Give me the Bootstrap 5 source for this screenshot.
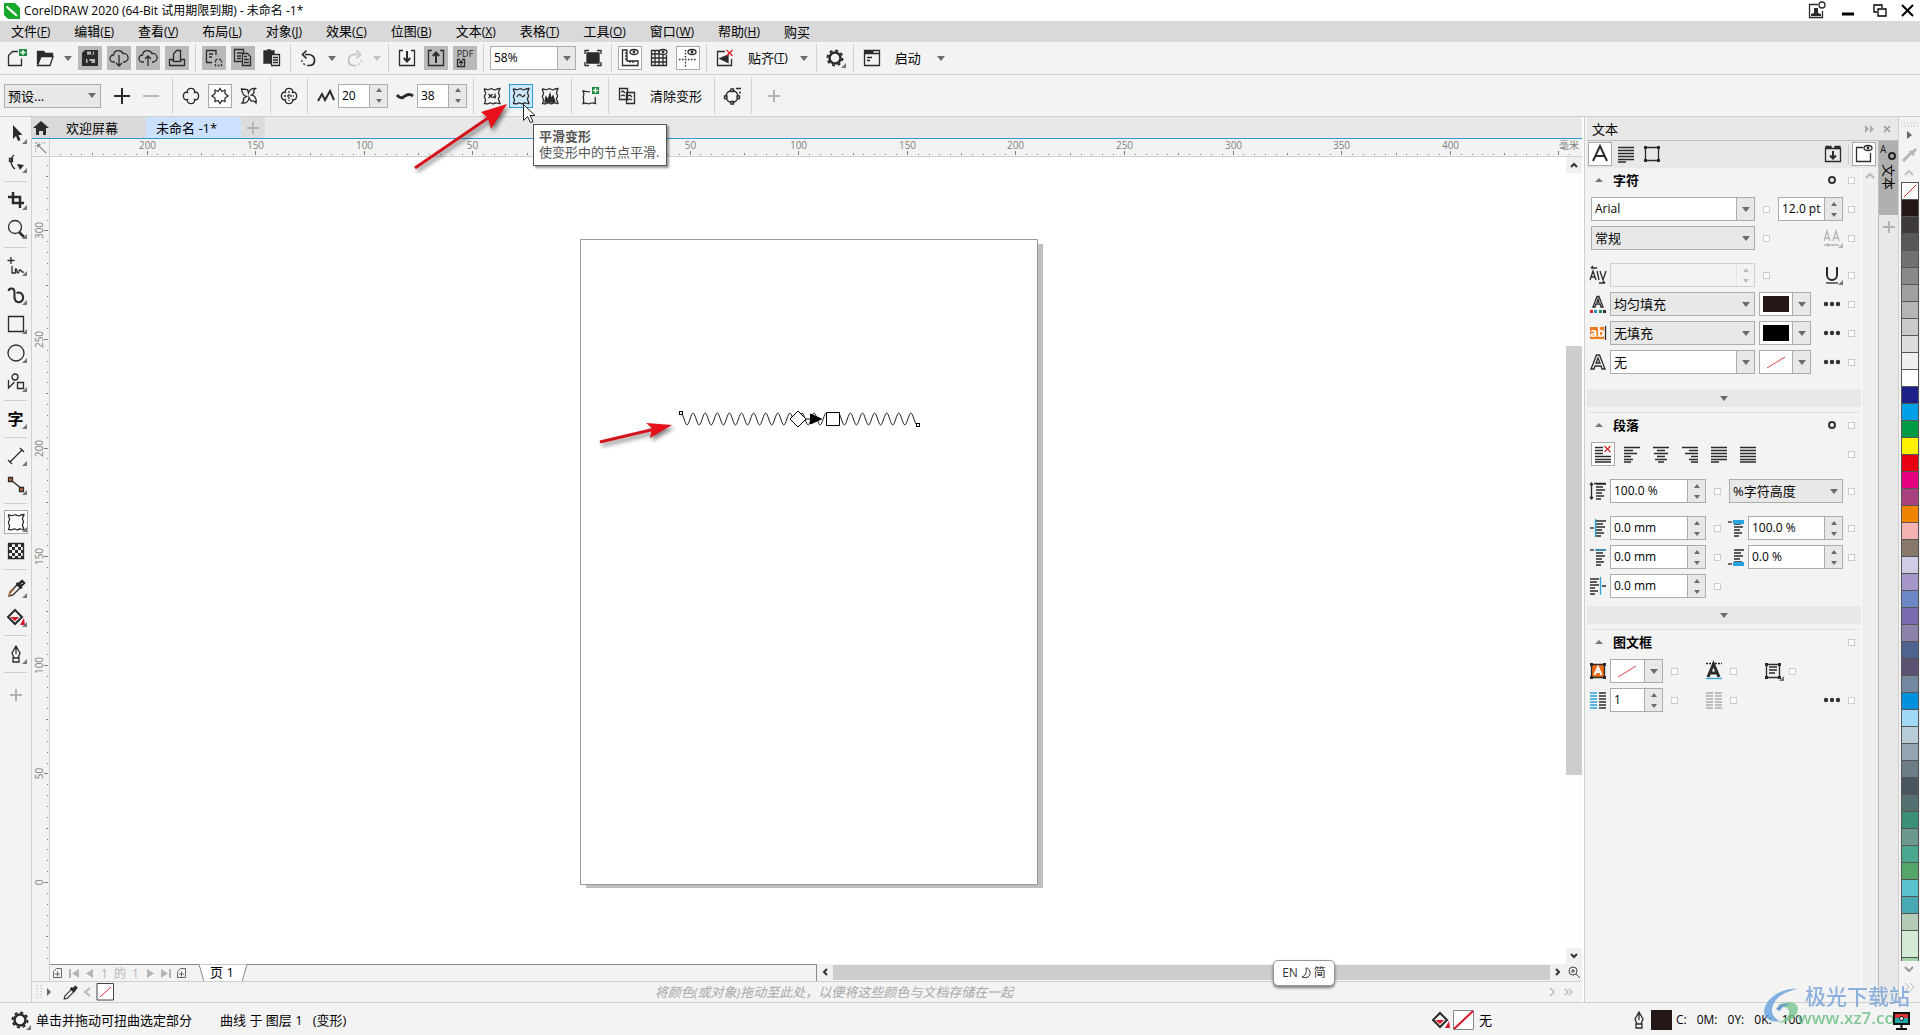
<!DOCTYPE html>
<html lang="zh-CN">
<head>
<meta charset="utf-8">
<meta name="viewport" content="width=device-width, initial-scale=1">
<title>CorelDRAW 2020 - 未命名 -1*</title>
<link href="https://cdn.jsdelivr.net/npm/bootstrap@5.3.0/dist/css/bootstrap.min.css" rel="stylesheet">
<style>
:root{--panel:#f3f3f3;--edge:#cfcfcf;--shade:#e8e8e8;--ink:#2b2b2b}
body{font-family:"Open Sans","Noto Sans CJK SC",sans-serif;font-size:13px;line-height:16px;color:#000;background:var(--panel)}
.app{min-height:100vh;overflow:hidden}
svg{display:block;flex:none;overflow:visible}
.ic{width:24px;height:24px;fill:none;stroke:var(--ink);stroke-width:1.3}
.tb{width:24px;height:24px;padding:0;border:1px solid transparent;background:none;display:flex;align-items:center;justify-content:center;flex:none;color:#000}
.tb.held{background:#b9b9b9}
.tb.picked{background:#fff;border-color:#a9a9a9}
.tb.hot{background:#cde8fb;border-color:#2a9bdc}
.tb.wordy{width:auto;height:24px;border:0;padding:0 6px;white-space:nowrap}
.drop{width:11px;height:24px;border:0;padding:0;background:none;display:flex;align-items:center;justify-content:center;flex:none}
.drop::before{content:"";border:4px solid transparent;border-top:5px solid #6b6b6b;border-bottom:0}
.drop.dim::before{border-top-color:#c4c4c4}
.titlebar{height:21px;background:#fff;font-size:12px}
.menubar{height:21px;background:#d9d9d9;gap:24px;padding-left:11px}
.menubar a{color:#000;text-decoration:none;white-space:nowrap}
.key{font-size:12px}
.bar{gap:5px;padding:0 4px;border-bottom:1px solid var(--edge);background:var(--panel)}
.bar1{height:33px}.bar2{height:42px}
.vsep{width:1px;align-self:stretch;margin:2px 1px;background:#d2d2d2;flex:none}
.field{height:24px;border:1px solid #acacac;background:#fff;display:flex;flex:none}
.field input{border:0;background:none;min-width:0;width:0;flex:1;padding:0 0 0 3px;font-size:12px;color:#000;outline:0}
.field .drop{width:18px;height:22px;border-left:1px solid #acacac;background:var(--shade)}
.steps{width:18px;border-left:1px solid #acacac;background:var(--shade);display:flex;flex-direction:column;flex:none}
.steps button{flex:1;border:0;padding:0;background:none;display:flex;align-items:center;justify-content:center}
.steps button::before{content:"";border:3px solid transparent}
.steps .up::before{border-bottom:4px solid #6b6b6b;border-top:0}
.steps .dn::before{border-top:4px solid #6b6b6b;border-bottom:0}
.field.off{border-color:#d0d0d0;background:none}.field.off .steps{border-color:#d0d0d0;background:none;opacity:.4}
.pick{height:24px;border:1px solid #acacac;border-radius:0;appearance:none;padding:0 20px 0 3px;font-size:13px;line-height:20px;color:#000;flex:none;background:var(--shade) url("data:image/svg+xml,%3Csvg xmlns='http://www.w3.org/2000/svg' width='8' height='5'%3E%3Cpath d='M0 0h8L4 5z' fill='%236b6b6b'/%3E%3C/svg%3E") no-repeat right 4px center}
.toolbox{width:32px;border-right:1px solid var(--edge);padding:5px 4px;gap:5px;background:var(--panel)}
.hsep{height:1px;margin:1px 0;align-self:stretch;background:var(--edge)}
.fly{position:relative}
.fly::after{content:"";position:absolute;right:0;bottom:1px;border-left:5px solid transparent;border-bottom:5px solid #777}
.work{min-width:0}
.tabsrow{height:22px;background:var(--shade);border-bottom:1px solid #2a9bdc}
.tabsrow .tb{height:21px;background:#dcdcdc}
.doc{height:21px;padding:0 24px 0 10px;display:flex;align-items:center;color:#000;text-decoration:none;background:#d9d9d9}
.doc.now{background:#cce0ff}
.ruler{background:var(--panel);color:#777}
.ruler text{font-size:10px;fill:#808080;text-anchor:middle}
.ruler path{stroke:#808080}
.hrule{height:18px;border-bottom:1px solid var(--edge)}
.hrule .ic{height:17px}
.vrule{width:18px;border-right:1px solid var(--edge)}
.stage{background:#fff;min-height:300px}
.stage>svg{position:absolute;left:0;top:0;width:100%;height:100%}
.vscroll{width:16px;background:#fdfdfd}
.arrow{width:16px;height:16px;border:0;padding:0;background:#f0f0f0;flex:none;display:flex;align-items:center;justify-content:center}
.thumb{background:#cdcdcd}
.rest{flex:173}.grab{flex:429}
.pagebar{height:17px;background:var(--panel);color:#ababab;font-size:12px}
.pagebar .thumb{height:15px}
.pagenav{border-top:1px solid #8a8a8a;border-right:1px solid #8a8a8a;width:767px}
.docpal{height:21px;border-top:1px solid var(--edge)}
.docpal em{color:#a8a8a8}
.shade{filter:drop-shadow(2px 3px 2px rgba(0,0,0,.5))}
.gutter{width:5px;background:linear-gradient(90deg,#fff 2px,#cfcfcf 2px,#cfcfcf 3px,var(--panel) 3px)}
.docker{width:274px}
.dscroll{width:17px;background:#efefef;border-left:1px solid #fafafa}
.dhead{height:24px;background:var(--shade);border-bottom:1px solid #bdbdbd;padding-left:5px}
.dtabs{height:27px;background:var(--shade);padding:1px 2px 2px 1px;gap:2px}
.sect{padding:0 6px 0 4px}
.sect h2{font-size:13px;line-height:24px;font-weight:700;margin:0 0 5px;display:flex;align-items:center}
.sect h2::before{content:"";border:4px solid transparent;border-bottom:4px solid #777;border-top:0;margin:0 10px 0 4px}
.cog{margin:0 12px 0 auto}
.line{display:flex;align-items:center;height:24px;margin-bottom:5px}
.line.loose{margin-bottom:13px}
.line.apart{margin-top:13px}
.line.set{gap:5px}
.line>.ic{width:16px;height:24px;margin:0 4px 0 -1px}
.tick{appearance:none;width:7px;height:7px;border:1px solid #ccc;background:#fff;margin:0;flex:none}
.more{height:18px;width:100%;border:0;background:var(--shade);display:flex;align-items:center;justify-content:center}
.more.first{margin-top:15px}
.nextsect{margin-top:5px;border-top:1px solid #e2e2e2}
.chip{flex:1;margin:3px;background:#231815}
.w164{width:164px}.w145{width:145px}.w96{width:96px}.w95{width:95px}.w65{width:65px}.w53{width:53px}.w50{width:50px}.w86{width:86px}.w97{width:97px}.w114{width:114px}.w52{width:52px}
.zh{font-size:13px!important}
.sidecol{width:20px;background:var(--shade);border-left:1px solid #bdbdbd}
.sidecol .tb{width:19px}
.sidetab{height:74px;background:#b0b0b0;border:0;padding:3px 0 0;width:19px;display:flex;flex-direction:column;align-items:flex-start}
.sidetab span{writing-mode:vertical-rl;text-orientation:sideways;line-height:19px;font-size:13px}
.palette{width:22px;border-left:1px solid var(--edge);padding:0 0 0 2px}
.sw{width:18px;height:17px;border:1px solid #555;border-bottom-width:0;padding:0;display:block;flex:none}
.sw.tall{height:27px}.sw.cut{height:4px}
.status{height:33px;border-top:1px solid var(--edge);padding:2px 0 0 8px;background:var(--panel)}
.inkinfo{width:491px}
.cmyk{gap:10px;width:244px;font-size:12px}
.tip{position:absolute;left:533px;top:124px;width:134px;height:42px;background:#fff;border:1px solid #555;box-shadow:2px 2px 2px rgba(0,0,0,.4);padding:3px 5px;color:#555;line-height:16px;white-space:nowrap}
.ime{position:absolute;left:1273px;top:960px;height:26px;width:62px;background:#fff;border:1px solid #999;border-radius:5px;box-shadow:0 2px 3px rgba(0,0,0,.5);font-size:12px;color:#333;display:flex;align-items:center;justify-content:center;gap:3px}
.over{position:absolute;left:0;top:0;pointer-events:none}
.over.monitor{left:auto;top:auto;right:10px;bottom:4px}
.wm{position:absolute;right:9px;bottom:7px;width:150px;height:44px;pointer-events:none;text-align:right;opacity:.75}
.wm b{font-size:21px;color:#6b9bd6;display:block;font-weight:500;margin-right:1px;line-height:24px}
.wm i{font-style:normal;font-weight:600;font-size:17px;color:#5dba78;display:block;line-height:20px}
.wm svg{position:absolute;left:1px;top:3px}
</style>
</head>
<body>
<svg width="0" height="0" class="position-absolute">
<defs>
<symbol id="new" viewBox="0 0 24 24"><path d="M14 5.500H8.500L4.500 9.500v10h13v-7"/><path d="M15 3h8v7h-8z" fill="#1c8a3c" stroke="none"/><path d="M16.500 6.500h5M19 4v5" stroke="#fff"/></symbol>
<symbol id="open" viewBox="0 0 24 24"><path d="M4.500 18V5.500h6l2 2h7v3" fill="#2b2b2b"/><path d="M8 10.500h12L17 19.500H4.500z" fill="#f3f3f3"/></symbol>
<symbol id="save" viewBox="0 0 24 24"><path d="M4 7l3-3h13v16H4z" fill="#2b2b2b" stroke="none"/><path d="M9 5.500h7v3H9zM8 13h9v4H8z" fill="#b9b9b9" stroke="none"/><path d="M14 5v3M10.500 13v3h3" stroke-width="2"/></symbol>
<symbol id="cdn" viewBox="0 0 24 24"><path d="M8 16H6.500a3.500 3.500 0 0 1 0-7A5 5 0 0 1 16 7.500a4 4 0 0 1 1.500 8.500H16M12 9v11M9 17l3 3 3-3"/></symbol>
<symbol id="cup" viewBox="0 0 24 24"><path d="M8 16H6.500a3.500 3.500 0 0 1 0-7A5 5 0 0 1 16 7.500a4 4 0 0 1 1.500 8.500H16M12 20V10M9 13l3-3 3 3"/></symbol>
<symbol id="print" viewBox="0 0 24 24"><path d="M4.500 13.500h3l1 2h7l1-2h3v6h-15zM8.500 15V8l3-3.500h4V15"/></symbol>
<symbol id="copyA" viewBox="0 0 24 24"><path d="M14 9V4.500H4.500v12H10M7 8h4M7 11h3"/><path d="M13.500 13.500h6v6h-6z" stroke-dasharray="2 1.500"/></symbol>
<symbol id="copyB" viewBox="0 0 24 24"><path d="M11 15.500H3.500v-12h9V7M6 7h5M6 10h4M6 12.500h4M11.500 7.500h5l3 3v9h-8zM13 13.500h5M13 16.500h5M13 10.500h3"/></symbol>
<symbol id="paste" viewBox="0 0 24 24"><path d="M4 5h10v12H4z" fill="#2b2b2b"/><path d="M11.500 8.500h8v11h-8z" fill="#f3f3f3"/><path d="M7 4h4M13 11.500h5M13 14h5M13 16.500h5"/></symbol>
<symbol id="undo" viewBox="0 0 24 24"><path d="M8 8.500h4a6 5.500 0 0 1 5.500 6c0 3-2 5-5.500 5" stroke-width="1.700"/><path d="M9.500 4.500L5.500 8.500l4 4" stroke-width="1.700"/><path d="M12 19.500c-4 0-7-2-7.500-6" stroke-dasharray="2 2"/></symbol>
<symbol id="import" viewBox="0 0 24 24"><path d="M8 4.500H4.500v15H19.500v-15H16"/><path d="M12 5v10M8.800 12l3.200 3.500 3.200-3.500" stroke-width="2"/></symbol>
<symbol id="export" viewBox="0 0 24 24"><path d="M8 4.500H4.500v15H19.500v-15H16"/><path d="M12 17V7M8.800 10L12 6.500l3.200 3.500" stroke-width="2"/></symbol>
<symbol id="fit" viewBox="0 0 24 24"><path d="M6 7h12v10H6z" fill="#2b2b2b"/><path d="M4 8V4.500h4M16 4.500h4V8M20 16v3.500h-4M8 19.500H4V16"/></symbol>
<symbol id="eye" viewBox="0 0 24 24"><ellipse cx="16" cy="6" rx="4" ry="2.500"/><circle cx="16" cy="6" r=".8"/></symbol>
<symbol id="rul" viewBox="0 0 24 24"><path d="M4.500 4v15.500H20V15H9V4zM7 7h2M7 10h2M7 13h2M12 15v2M15 15v2"/><use href="#eye"/></symbol>
<symbol id="grid" viewBox="0 0 24 24"><path d="M4.500 4v15.500h15V9M4 4.500h8M8 4v15M12 4v15M16 9v10M4 8h8M4 12h16M4 16h16"/><use href="#eye"/></symbol>
<symbol id="guide" viewBox="0 0 24 24"><path d="M3 13.500h18M9.500 4v17" stroke-dasharray="1.500 1.500"/><use href="#eye"/></symbol>
<symbol id="snap" viewBox="0 0 24 24"><path d="M12 5.500H4.500v14h14V13"/><path d="M15 9l-8 3.500 8 4z" fill="#2b2b2b"/><path d="M13.500 4l6 6M19.500 4l-6 6" stroke="#e01b24"/></symbol>
<symbol id="gear" viewBox="0 0 24 24"><circle cx="12" cy="12" r="5.500" stroke-width="2.500"/><circle cx="12" cy="12" r="7.500" stroke-width="2" stroke-dasharray="3 2.890"/></symbol>
<symbol id="launch" viewBox="0 0 24 24"><path d="M4.500 4.500h15v15h-15zM4.500 7.500h15M7 11.500h5M7 14.500h3"/><path d="M4.500 6h9" stroke-width="3"/></symbol>
<symbol id="plus" viewBox="0 0 24 24"><path d="M4 12h16M12 4v16" stroke-width="2"/></symbol>
<symbol id="plusg" viewBox="0 0 24 24"><path d="M6 12h12M12 6v12" stroke="#b3b3b3" stroke-width="2"/></symbol>
<symbol id="minus" viewBox="0 0 24 24"><path d="M4 12h16" stroke="#b9b9b9" stroke-width="2"/></symbol>
<symbol id="push" viewBox="0 0 24 24"><path d="M8.500 8.500c-2-5.500 9-5.500 7 0 5.500-2 5.500 9 0 7 2 5.500-9 5.500-7 0-5.500 2-5.500-9 0-7z"/></symbol>
<symbol id="zip" viewBox="0 0 24 24"><path d="M12 4.500l2 3 3-1.500v3.500l3 2.500-3 2v3.500l-3-1-2 3-2-3-3 1V14l-3-2 3-2.500V6l3 1.500z"/></symbol>
<symbol id="twist" viewBox="0 0 24 24"><path d="M4.500 5l6 .5 1 3.500c1-3 3-5 7-4.500-1.500 1-2 3-1.500 4.500l-2.500 2c3 0 5.500 4 4.500 8-1-2-3-2.500-5-2l-2-3.500c0 4-3 6-7 5.500 1-1 2-3 1.500-4.500l3-2C6 12 5 8 4.500 5z"/></symbol>
<symbol id="amp" viewBox="0 0 24 24"><path d="M4 17l4-7 3 6 5-9 4 9" stroke-width="2"/></symbol>
<symbol id="freq" viewBox="0 0 24 24"><path d="M4 11c4 5 6 2 8 1s4-3 8 0" stroke-width="3"/></symbol>
<symbol id="blob" viewBox="0 0 24 24"><path d="M4.500 5c2 0 3 1 4.500.5S11 4 12.500 5s2 1.500 3.500.5 2.500-1 4-1c0 1.500-1.500 2.500-1.500 4s1 2 1 3.500-1.500 2-1 3.500 1 2 1.500 4c-2 .5-2.500-1-4.500-.5s-2 1.500-3.500.5-2-1-3.500 0-2.500 0-4 0c0-1.500 1.500-2.500 1-4s-1.500-2-1-3.500 1.500-2 1-3.500-1.500-2-1-3.500z"/></symbol>
<symbol id="rnd" viewBox="0 0 24 24"><use href="#blob"/><path d="M8.500 10l4 4M8.500 14l4-4M15 9.500v5M13 13h3"/></symbol>
<symbol id="smooth" viewBox="0 0 24 24"><use href="#blob"/><path d="M8 13c1-3 3-3 4-1.500s3 1.500 4-1"/></symbol>
<symbol id="local" viewBox="0 0 24 24"><use href="#blob"/><path d="M7 18l1-5 2 3 2-6 1 5 2-3 2 6z" fill="#2b2b2b"/></symbol>
<symbol id="addb" viewBox="0 0 24 24"><path d="M12 7.500c-2 1-4 0-7-.5 1 2 1.500 3 .5 5s1.500 4-.5 7.500c2 0 3-1 4.500 0s2.500 0 4-.5 2 .5 4 .5c-1-2 .5-4-.5-6.500"/><path d="M14 3h7v7h-7z" fill="#1c8a3c" stroke="none"/><path d="M15 6.500h5M17.500 4v5" stroke="#fff"/></symbol>
<symbol id="copyd" viewBox="0 0 24 24"><path d="M4.500 4.500h8v11h-8zM11.500 8.500h8v11h-8z" fill="#f3f3f3"/><path d="M6 8l2-1 2 2M6 12l2-1 2 1M13 12l2-1 2 2M13 16l2-1 2 1"/></symbol>
<symbol id="conv" viewBox="0 0 24 24"><circle cx="11" cy="12.500" r="6"/><path d="M10 5h2.500v2.500H10zM3.500 12H6v2.500H3.500zM10 17.500h2.500V20H10zM16 12h2.500v2.500H16z" fill="#f3f3f3"/><path d="M15 4.500h5M18 8.500h2"/></symbol>
<symbol id="drp" viewBox="0 0 24 24"><path d="M5 20l1-4 8-8 3 3-8 8z"/><path d="M12.500 7l5.500 5M14 9l4-4 2 2-4 4z" stroke-width="2.500"/><path d="M5 20l1-3 4-4" stroke="#c86b32"/></symbol>
<symbol id="buck" viewBox="0 0 24 24"><path d="M11 5l7 7-7 7-7-7z" stroke-width="2"/><path d="M6 12h9l-4 4zM20 13l1 7h-5z" fill="#d7182a" stroke="none"/></symbol>
<symbol id="nib" viewBox="0 0 24 24"><path d="M12 4l4 7-2 5h-4l-2-5zM12 5v7M9 16h6v4H9z"/></symbol>
<symbol id="lines" viewBox="0 0 24 24"><path d="M4 5.500h16M4 8.500h16M4 11.500h16M4 14.500h16M4 17.500h16M4 20h8"/></symbol>
<symbol id="frame" viewBox="0 0 24 24"><path d="M5.500 5.500h13v13h-13z"/><path d="M4 4h3v3H4zM17 4h3v3h-3zM4 17h3v3H4zM17 17h3v3h-3z" fill="#2b2b2b" stroke="none"/></symbol>
<symbol id="para" viewBox="0 0 16 24"><path d="M6 5h10M6 8h7M6 11h9M6 14h6M6 17h8M6 20h5"/></symbol>
<symbol id="dots" viewBox="0 0 24 24"><g fill="#333" stroke="none"><circle cx="6" cy="12" r="2.200"/><circle cx="12" cy="12" r="2.200"/><circle cx="18" cy="12" r="2.200"/></g></symbol>
</defs>
</svg>

<div class="app d-flex flex-column position-relative">
<header class="titlebar d-flex align-items-center ps-1">
  <svg width="16" height="16" viewBox="0 0 16 16"><path d="M0 0h11l5 5v11H4l-4-4z" fill="#18a82c"/><path d="M3 3l9 8 1 2-2-1-8-7z" fill="#fff" stroke="#fff"/></svg>
  <span class="ms-1">CorelDRAW 2020 (64-Bit 试用期限到期) - 未命名 -1*</span>
  <div class="ms-auto d-flex align-items-center gap-1">
    <button class="tb me-1" aria-label="登录"><svg class="ic" viewBox="0 0 24 24"><path d="M14 5.500H5.500v13h13V12"/><path d="M7 17v-2l3-1V9h4v5l3 1v2z" fill="#2b2b2b" stroke="none"/><circle cx="18" cy="6" r="3"/></svg></button>
    <button class="tb me-1" aria-label="最小化"><svg class="ic" viewBox="0 0 24 24"><path d="M6 15h12" stroke="#000" stroke-width="3"/></svg></button>
    <button class="tb" aria-label="还原"><svg class="ic" viewBox="0 0 24 24" stroke-width="2"><path d="M9 13H6V6h8v3M10 10h8v7h-8z" stroke="#000"/></svg></button>
    <button class="tb" aria-label="关闭"><svg class="ic" viewBox="0 0 24 24"><path d="M6 6l11 11M17 6L6 17" stroke="#000" stroke-width="2"/></svg></button>
  </div>
</header>
<nav class="menubar d-flex align-items-center" id="menu"></nav>

<div class="bar bar1 d-flex align-items-center">
  <button class="tb" aria-label="新建"><svg class="ic"><use href="#new"/></svg></button>
  <button class="tb" aria-label="打开"><svg class="ic"><use href="#open"/></svg></button>
  <button class="drop" aria-label="最近"></button>
  <button class="tb held" aria-label="保存"><svg class="ic"><use href="#save"/></svg></button>
  <button class="tb held" aria-label="下载"><svg class="ic"><use href="#cdn"/></svg></button>
  <button class="tb held" aria-label="上传"><svg class="ic"><use href="#cup"/></svg></button>
  <button class="tb held" aria-label="打印"><svg class="ic"><use href="#print"/></svg></button>
  <i class="vsep"></i>
  <button class="tb held" aria-label="剪切"><svg class="ic"><use href="#copyA"/></svg></button>
  <button class="tb held" aria-label="复制"><svg class="ic"><use href="#copyB"/></svg></button>
  <button class="tb" aria-label="粘贴"><svg class="ic"><use href="#paste"/></svg></button>
  <i class="vsep"></i>
  <button class="tb" aria-label="撤消"><svg class="ic"><use href="#undo"/></svg></button>
  <button class="drop" aria-label="撤消列表"></button>
  <button class="tb" aria-label="重做"><svg class="ic opacity-25"><use href="#undo" transform="matrix(-1 0 0 1 24 0)"/></svg></button>
  <button class="drop dim" aria-label="重做列表"></button>
  <i class="vsep"></i>
  <button class="tb" aria-label="导入"><svg class="ic"><use href="#import"/></svg></button>
  <button class="tb held" aria-label="导出"><svg class="ic"><use href="#export"/></svg></button>
  <button class="tb held" aria-label="发布为 PDF"><svg class="ic" viewBox="0 0 24 24"><text x="12" y="11" text-anchor="middle" font-size="9" fill="#222" stroke="none">PDF</text><path d="M7 13.500H4.500v7h7v-7H9M8 19v-4M6 17l2-2 2 2"/></svg></button>
  <i class="vsep"></i>
  <div class="field w86"><input value="58%" aria-label="缩放级别"><button class="drop" aria-label="缩放列表"></button></div>
  <button class="tb" aria-label="全屏预览"><svg class="ic"><use href="#fit"/></svg></button>
  <i class="vsep"></i>
  <button class="tb picked" aria-label="标尺"><svg class="ic"><use href="#rul"/></svg></button>
  <button class="tb" aria-label="网格"><svg class="ic"><use href="#grid"/></svg></button>
  <button class="tb picked" aria-label="辅助线"><svg class="ic"><use href="#guide"/></svg></button>
  <i class="vsep"></i>
  <button class="tb" aria-label="关闭贴齐"><svg class="ic"><use href="#snap"/></svg></button>
  <button class="tb wordy">贴齐<span class="key">(<u>T</u>)</span></button>
  <button class="drop" aria-label="贴齐列表"></button>
  <i class="vsep"></i>
  <button class="tb fly" aria-label="选项"><svg class="ic"><use href="#gear"/></svg></button>
  <i class="vsep"></i>
  <button class="tb" aria-label="启动图标"><svg class="ic"><use href="#launch"/></svg></button>
  <button class="tb wordy">启动</button>
  <button class="drop ms-1" aria-label="启动列表"></button>
</div>

<div class="bar bar2 d-flex align-items-center">
  <select class="pick w97" aria-label="预设"><option>预设...</option></select>
  <button class="tb ms-1" aria-label="添加预设"><svg class="ic"><use href="#plus"/></svg></button>
  <button class="tb" aria-label="删除预设"><svg class="ic"><use href="#minus"/></svg></button>
  <i class="vsep ms-1"></i>
  <button class="tb" aria-label="推拉变形"><svg class="ic"><use href="#push"/></svg></button>
  <button class="tb picked" aria-label="拉链变形"><svg class="ic"><use href="#zip"/></svg></button>
  <button class="tb" aria-label="扭曲变形"><svg class="ic"><use href="#twist"/></svg></button>
  <i class="vsep ms-1"></i>
  <button class="tb" aria-label="居中变形"><svg class="ic"><use href="#push"/><path d="M12 7v10M7 12h10" stroke-dasharray="2 1"/></svg></button>
  <i class="vsep"></i>
  <div class="d-flex"><label class="d-flex" for="amp-in" aria-label="振幅"><svg class="ic"><use href="#amp"/></svg></label><div class="field w50"><input id="amp-in" value="20"><span class="steps"><button class="up" aria-label="增加"></button><button class="dn" aria-label="减少"></button></span></div></div>
  <div class="d-flex"><label class="d-flex" for="freq-in" aria-label="频率"><svg class="ic"><use href="#freq"/></svg></label><div class="field w50"><input id="freq-in" value="38"><span class="steps"><button class="up" aria-label="增加"></button><button class="dn" aria-label="减少"></button></span></div></div>
  <i class="vsep"></i>
  <button class="tb" aria-label="随机变形"><svg class="ic"><use href="#rnd"/></svg></button>
  <button class="tb hot" aria-label="平滑变形"><svg class="ic"><use href="#smooth"/></svg></button>
  <button class="tb" aria-label="局限变形"><svg class="ic"><use href="#local"/></svg></button>
  <i class="vsep ms-1"></i>
  <button class="tb" aria-label="添加新的变形"><svg class="ic"><use href="#addb"/></svg></button>
  <i class="vsep"></i>
  <button class="tb" aria-label="复制变形属性"><svg class="ic"><use href="#copyd"/></svg></button>
  <button class="tb wordy">清除变形</button>
  <i class="vsep"></i>
  <button class="tb" aria-label="转换为曲线"><svg class="ic"><use href="#conv"/></svg></button>
  <i class="vsep"></i>
  <button class="tb ms-1" aria-label="自定义"><svg class="ic"><use href="#plusg"/></svg></button>
</div>

<main class="d-flex flex-grow-1">
  <aside class="toolbox d-flex flex-column align-items-center flex-shrink-0">
    <button class="tb fly" aria-label="选择"><svg class="ic" viewBox="0 0 24 24"><path d="M9 3v14l3-3 2 5 2.500-1-2-5h4z" fill="#2b2b2b" stroke="none"/></svg></button>
    <button class="tb fly" aria-label="形状"><svg class="ic" viewBox="0 0 24 24"><path d="M10 4c-4 3-4 10 1 14M5.500 7.500h3v3h-3z"/><path d="M13 13l7 1-4 5z" fill="#2b2b2b" stroke="none"/></svg></button>
    <i class="hsep"></i>
    <button class="tb fly" aria-label="裁剪"><svg class="ic" viewBox="0 0 24 24"><path d="M4 9h12v11M9 4v11h11" stroke-width="2.500"/></svg></button>
    <button class="tb fly" aria-label="缩放"><svg class="ic" viewBox="0 0 24 24"><circle cx="11" cy="10" r="6.500"/><path d="M15 15l5 5" stroke-width="2.500"/></svg></button>
    <i class="hsep"></i>
    <button class="tb fly" aria-label="手绘"><svg class="ic" viewBox="0 0 24 24"><path d="M7 3v7M3.500 6.500h7M8 12v7h3c2 0-1-4 1-4s0 4 2 4 0-3 2-3 1 3 4 2"/></svg></button>
    <button class="tb fly" aria-label="艺术笔"><svg class="ic" viewBox="0 0 24 24"><path d="M4.500 8c1-4 6-3 6 1s-1 9 3 10 7-3 5-7-6-2-6-2" stroke-width="2"/></svg></button>
    <button class="tb fly" aria-label="矩形"><svg class="ic" viewBox="0 0 24 24"><path d="M4.500 4.500h15v15h-15z"/></svg></button>
    <button class="tb fly" aria-label="椭圆形"><svg class="ic" viewBox="0 0 24 24"><circle cx="12" cy="12" r="8"/></svg></button>
    <button class="tb fly" aria-label="多边形"><svg class="ic" viewBox="0 0 24 24"><circle cx="11" cy="7" r="3"/><path d="M4.500 10v8l6-6M13.500 12.500h6v6h-6z"/></svg></button>
    <i class="hsep"></i>
    <button class="tb fly fw-bold fs-6" aria-label="文本">字</button>
    <i class="hsep"></i>
    <button class="tb fly" aria-label="平行度量"><svg class="ic" viewBox="0 0 24 24"><path d="M6 18L18 6M4 16l4 4M16 4l4 4"/></svg></button>
    <button class="tb fly" aria-label="连接器"><svg class="ic" viewBox="0 0 24 24"><path d="M7 7l11 9"/><path d="M4.500 4.500h4v4h-4zM15.500 14.500h4v4h-4z" fill="#c86b32"/></svg></button>
    <i class="hsep"></i>
    <button class="tb fly picked" aria-label="变形"><svg class="ic"><use href="#blob"/></svg></button>
    <button class="tb" aria-label="透明度"><svg class="ic" viewBox="0 0 24 24"><path d="M4.500 4.500h15v15h-15z"/><path d="M5 6.500h14M8 9.500h12M5 12.500h14M8 15.500h12M5 18.500h14" stroke-width="3" stroke-dasharray="3 3"/></svg></button>
    <i class="hsep"></i>
    <button class="tb fly" aria-label="颜色滴管"><svg class="ic"><use href="#drp"/></svg></button>
    <button class="tb fly" aria-label="交互式填充"><svg class="ic"><use href="#buck"/></svg></button>
    <i class="hsep"></i>
    <button class="tb fly" aria-label="轮廓笔"><svg class="ic"><use href="#nib"/></svg></button>
    <i class="hsep"></i>
    <button class="tb mt-1" aria-label="快速自定义"><svg class="ic"><use href="#plusg"/></svg></button>
  </aside>

  <section class="work d-flex flex-column flex-grow-1">
    <div class="tabsrow d-flex">
      <a class="doc pe-3 ps-0" href="#"><svg width="18" height="18" viewBox="0 0 18 18"><path d="M9 2l8 7h-3v7h-3v-4H7v4H4V9H1z" fill="#2b2b2b"/></svg><span class="ps-3 pe-2 me-1">欢迎屏幕</span></a>
      <a class="doc now" href="#">未命名 -1*</a>
      <button class="tb" aria-label="新文档"><svg class="ic"><use href="#plusg"/></svg></button>
    </div>
    <div class="ruler hrule d-flex">
      <svg class="ic vrule" viewBox="0 0 18 18"><path d="M6 6l9 9M6 6h3M6 6v3" stroke="#555"/><path d="M4 4h12M4 4v12" stroke="#888" stroke-dasharray="1 2"/></svg>
      <svg id="hr" class="flex-grow-1" height="17"></svg>
    </div>
    <div class="d-flex flex-grow-1">
      <div class="ruler vrule flex-shrink-0 position-relative"><svg id="vr" class="position-absolute" width="17" height="100%"></svg></div>
      <div class="stage flex-grow-1 position-relative overflow-hidden">
        <svg id="art">
          <path d="M536 87h457v644H536z" fill="#bfbfbf"/>
          <path d="M530.500 82.500h457v645h-457z" fill="#fff" stroke="#9a9a9a"/>
          <path id="wave" fill="none" stroke="#222"/>
          <g fill="#fff" stroke="#000"><path d="M756 262h14"/><path d="M748 254l8 8-8 8-8-8z"/><path d="M760.500 257l11 5-11 5z" fill="#000"/><path d="M776.500 255.500h13v13h-13z"/><path d="M629.500 254.500h3v3h-3zM866.500 266.500h3v3h-3z" shape-rendering="crispEdges"/></g>
          <g class="shade"><path d="M550 285l55-13" stroke="#d4141c" stroke-width="3"/><path d="M622 268l-26-2 6 5-2 10z" fill="#e8101a"/></g>
        </svg>
      </div>
      <div class="vscroll d-flex flex-column flex-shrink-0">
        <button class="arrow" aria-label="向上"><svg width="8" height="6"><path d="M1 5l3-3 3 3" fill="none" stroke="#333" stroke-width="2"/></svg></button>
        <div class="rest"></div><div class="thumb grab"></div><div class="rest"></div>
        <button class="arrow" aria-label="向下"><svg width="8" height="6"><path d="M1 1l3 3 3-3" fill="none" stroke="#333" stroke-width="2"/></svg></button>
      </div>
    </div>
    <div class="pagebar d-flex">
      <div class="vrule flex-shrink-0"></div>
      <div class="pagenav d-flex align-items-center flex-shrink-0">
        <svg width="150" height="16" viewBox="0 0 150 16"><g fill="none" stroke="#666"><path d="M6.500 3.500h5v9h-8v-6zM5 9h5M7.500 6.500v5M130.500 3.500h5v9h-8v-6zM129 9h5M131.500 6.500v5"/></g><g fill="#b5b5b5"><path d="M19 4h2v9h-2zM29 4v9l-7-4.500zM43 4v9l-7-4.500zM97 4v9l7-4.500zM111 4v9l7-4.500zM119 4h2v9h-2z"/><text x="51" y="13" font-size="12">1</text><text x="64" y="13" font-size="12">的</text><text x="82" y="13" font-size="12">1</text></g></svg>
        <svg width="48" height="17" viewBox="0 0 48 17"><path d="M-1-.5l5 17h38l5-17" fill="#fff" stroke="#8a8a8a"/><text x="10" y="12" font-size="13">页 1</text></svg>
      </div>
      <button class="arrow" aria-label="向左"><svg width="6" height="8"><path d="M5 1L2 4l3 3" fill="none" stroke="#333" stroke-width="2"/></svg></button>
      <div class="thumb flex-grow-1 my-auto"></div>
      <button class="arrow" aria-label="向右"><svg width="6" height="8"><path d="M1 1l3 3-3 3" fill="none" stroke="#333" stroke-width="2"/></svg></button>
      <button class="arrow" aria-label="导航器"><svg width="14" height="14"><circle cx="6" cy="6" r="4" fill="none" stroke="#444"/><path d="M9 9l4 4M4 6h4M6 4v4" stroke="#444"/></svg></button>
    </div>
    <div class="docpal d-flex align-items-center ps-1">
      <svg width="84" height="18" viewBox="0 0 84 18"><path d="M1 2v14M5 2v14" stroke="#aaa" stroke-dasharray="1 2"/><path d="M11 5l4 4-4 4z" fill="#666"/><g transform="translate(25 0) scale(.8)" class="ic"><path d="M4 20l1-4 8-8 3 3-8 8z"/><path d="M12 6l5 5M14 8l4-3 1 1-3 4z" stroke-width="3"/></g><path d="M54 5l-5 4 5 4" fill="none" stroke="#bbb" stroke-width="2"/><path d="M61 .5h16.500v16.500H61z" fill="#fff" stroke="#444"/><path d="M64 14L75 4" stroke="#d33"/></svg>
      <em class="mx-auto">将颜色(或对象)拖动至此处，以便将这些颜色与文档存储在一起</em>
      <svg width="34" height="12"><path d="M2 2l4 4-4 4M17 3l3 3-3 3M21 3l3 3-3 3" fill="none" stroke="#bbb" stroke-width="1.500"/></svg>
    </div>
  </section>
  <div class="gutter flex-shrink-0"></div>

  <section class="d-flex flex-column flex-shrink-0">
    <div class="dhead d-flex align-items-center">文本
      <svg class="ms-auto" width="34" height="12"><path d="M1 2l4 4-4 4zM6 2l4 4-4 4z" fill="#aaa"/><path d="M20 3l6 6M26 3l-6 6" stroke="#999" stroke-width="1.500"/></svg></div>
    <div class="d-flex flex-grow-1">
      <div class="d-flex flex-column">
        <div class="dtabs d-flex">
          <button class="tb picked" aria-label="字符"><svg class="ic" viewBox="0 0 24 24"><path d="M5 19l7-15 7 15M8 14h8" stroke-width="2"/></svg></button>
          <button class="tb" aria-label="段落"><svg class="ic"><use href="#lines"/></svg></button>
          <button class="tb" aria-label="图文框"><svg class="ic"><use href="#frame"/></svg></button>
          <button class="tb ms-auto" aria-label="导入样式"><svg class="ic" viewBox="0 0 24 24"><path d="M4.500 6.500h15v13h-15z"/><path d="M5 7V4.500h5V7M14 7V4.500h5V7" fill="#2b2b2b"/><path d="M12 9v7M9 13.500l3 3 3-3" stroke-width="2"/></svg></button>
          <i class="vsep"></i>
          <button class="tb picked" aria-label="显示"><svg class="ic" viewBox="0 0 24 24"><path d="M11 5.500H4.500v14h14V11"/><use href="#eye"/></svg></button>
        </div>
        <div class="d-flex flex-grow-1">
        <div class="docker">
          <div class="sect">
            <h2>字符<svg class="cog" width="8" height="8"><circle cx="4" cy="4" r="3" fill="none" stroke="#333" stroke-width="2"/></svg><input type="checkbox" class="tick" aria-label="字符样式"></h2>
            <div class="line"><div class="field w164"><input value="Arial" aria-label="字体"><button class="drop" aria-label="字体列表"></button></div><input type="checkbox" class="tick mx-2" aria-label="字体样式"><div class="field w65"><input value="12.0 pt" aria-label="字号"><span class="steps"><button class="up" aria-label="增加"></button><button class="dn" aria-label="减少"></button></span></div><input type="checkbox" class="tick ms-auto" aria-label="字号样式"></div>
            <div class="line"><select class="pick w164" aria-label="字形"><option>常规</option></select><input type="checkbox" class="tick ms-2" aria-label="字形样式"><button class="tb fly ms-auto me-1 opacity-50" aria-label="大小写"><svg class="ic" viewBox="0 0 24 24"><path d="M4 15l3-10 3 10M5 12h4M13 15l3-10 3 10M14 12h4M4 19h15M8 17v4" stroke="#777"/></svg></button><input type="checkbox" class="tick" aria-label="大小写样式"></div>
            <div class="line apart"><svg class="ic" viewBox="0 0 16 24"><path d="M0 17l3-9 3 9M1 14h4M7 8l2 9M10 8l3 9 3-9M1 5h6M1 5l2-2M9 20h6M15 20l-2-2"/></svg><div class="field off w145"><input aria-label="字距"><span class="steps"><button class="up" aria-label="增加"></button><button class="dn" aria-label="减少"></button></span></div><input type="checkbox" class="tick ms-2" aria-label="字距样式"><button class="tb fly ms-auto me-1" aria-label="下划线"><svg class="ic" viewBox="0 0 24 24"><path d="M7 4v8a5 5 0 0 0 10 0V4" stroke-width="2"/><path d="M6 20h12"/></svg></button><input type="checkbox" class="tick" aria-label="下划线样式"></div>
            <div class="line"><svg class="ic" viewBox="0 0 16 24"><path d="M3 15L7 4.500h2L13 15h-2l-1-3H6l-1 3zM7 10h2L8 7z"/><path d="M0 18h3v3H0z" fill="#d22" stroke="none"/><path d="M4 18h3v3H4z" fill="#29c" stroke="none"/><path d="M9 18h3v3H9z" fill="#285" stroke="none"/><path d="M13 18h3v3h-3z" fill="#333" stroke="none"/></svg><select class="pick w145" aria-label="填充类型"><option>均匀填充</option></select><div class="field w52 ms-1"><span class="chip"></span><button class="drop" aria-label="填充颜色"></button></div><button class="tb ms-auto me-1" aria-label="填充设置"><svg class="ic"><use href="#dots"/></svg></button><input type="checkbox" class="tick" aria-label="填充样式"></div>
            <div class="line"><svg class="ic" viewBox="0 0 16 24"><path d="M0 6h14v12H0z" fill="#ef7a1a" stroke="none"/><text x="0" y="16" font-size="12" font-weight="700" fill="#fff" stroke="none">ab</text><path d="M15.500 5v14"/></svg><select class="pick w145" aria-label="背景填充类型"><option>无填充</option></select><div class="field w52 ms-1"><span class="chip bg-black"></span><button class="drop" aria-label="背景颜色"></button></div><button class="tb ms-auto me-1" aria-label="背景设置"><svg class="ic"><use href="#dots"/></svg></button><input type="checkbox" class="tick" aria-label="背景样式"></div>
            <div class="line"><svg class="ic" viewBox="0 0 16 24"><path d="M1 19L6.500 5h3L15 19h-3l-1-3H5l-1 3zM6 13h4L8 8z"/></svg><div class="field w145"><input class="zh" value="无" aria-label="轮廓宽度"><button class="drop" aria-label="轮廓列表"></button></div><div class="field w52 ms-1"><svg width="32" height="22"><path d="M7 17L25 6" stroke="#d44"/></svg><button class="drop" aria-label="轮廓颜色"></button></div><button class="tb ms-auto me-1" aria-label="轮廓设置"><svg class="ic"><use href="#dots"/></svg></button><input type="checkbox" class="tick" aria-label="轮廓样式"></div>
          </div>
          <button class="more first" aria-label="更多字符选项"><span class="drop"></span></button>
          <div class="sect nextsect">
            <h2>段落<svg class="cog" width="8" height="8"><circle cx="4" cy="4" r="3" fill="none" stroke="#333" stroke-width="2"/></svg><input type="checkbox" class="tick" aria-label="段落样式"></h2>
            <div class="line loose set">
              <button class="tb picked" aria-label="无对齐"><svg class="ic" viewBox="0 0 24 24"><path d="M4 5.500h8M4 8.500h8M4 11.500h8M4 14.500h16M4 17.500h16M4 20h16"/><path d="M13.500 4l6 6M19.500 4l-6 6" stroke="#d22"/></svg></button>
              <button class="tb" aria-label="左对齐"><svg class="ic" viewBox="0 0 24 24"><path d="M4 5.500h16M4 8.500h9M4 11.500h13M4 14.500h7M4 17.500h9M4 20h7"/></svg></button>
              <button class="tb" aria-label="居中"><svg class="ic" viewBox="0 0 24 24"><path d="M4 5.500h16M8 8.500h8M5 11.500h14M8 14.500h8M6 17.500h12M9 20h6"/></svg></button>
              <button class="tb" aria-label="右对齐"><svg class="ic" viewBox="0 0 24 24"><path d="M4 5.500h16M11 8.500h9M7 11.500h13M13 14.500h7M11 17.500h9M13 20h7"/></svg></button>
              <button class="tb" aria-label="两端对齐"><svg class="ic"><use href="#lines"/></svg></button>
              <button class="tb" aria-label="强制两端对齐"><svg class="ic" viewBox="0 0 24 24"><path d="M4 5.500h16M4 8.500h16M4 11.500h16M4 14.500h16M4 17.500h16M4 20h16"/></svg></button>
              <input type="checkbox" class="tick ms-auto" aria-label="对齐样式"></div>
            <div class="line loose"><svg class="ic"><use href="#para"/><path d="M1.500 4v16M0 6l1.500-2L3 6M0 18l1.500 2L3 18M4 4.500h12"/></svg><div class="field w96"><input value="100.0 %" aria-label="行间距"><span class="steps"><button class="up" aria-label="增加"></button><button class="dn" aria-label="减少"></button></span></div><input type="checkbox" class="tick mx-2" aria-label="行距样式"><select class="pick w114" aria-label="行距单位"><option>%字符高度</option></select><input type="checkbox" class="tick ms-auto" aria-label="单位样式"></div>
            <div class="line"><svg class="ic"><use href="#para"/><path d="M5.500 3v18" stroke="#29a3e0"/><path d="M0 12h4"/></svg><div class="field w96"><input value="0.0 mm" aria-label="左行缩进"><span class="steps"><button class="up" aria-label="增加"></button><button class="dn" aria-label="减少"></button></span></div><input type="checkbox" class="tick mx-2" aria-label="左缩进样式"><svg class="ic"><use href="#para"/><path d="M5 6h11" stroke="#29a3e0" stroke-width="4"/><path d="M0 6h4"/></svg><div class="field w95"><input value="100.0 %" aria-label="段前间距"><span class="steps"><button class="up" aria-label="增加"></button><button class="dn" aria-label="减少"></button></span></div><input type="checkbox" class="tick ms-auto" aria-label="段前样式"></div>
            <div class="line"><svg class="ic"><use href="#para"/><path d="M5 5h11" stroke="#29a3e0"/><path d="M0 5h4"/></svg><div class="field w96"><input value="0.0 mm" aria-label="首行缩进"><span class="steps"><button class="up" aria-label="增加"></button><button class="dn" aria-label="减少"></button></span></div><input type="checkbox" class="tick mx-2" aria-label="首行样式"><svg class="ic"><use href="#para"/><path d="M5 19h11" stroke="#29a3e0" stroke-width="4"/><path d="M0 19h4"/></svg><div class="field w95"><input value="0.0 %" aria-label="段后间距"><span class="steps"><button class="up" aria-label="增加"></button><button class="dn" aria-label="减少"></button></span></div><input type="checkbox" class="tick ms-auto" aria-label="段后样式"></div>
            <div class="line"><svg class="ic" viewBox="0 0 16 24"><path d="M0 5h9M0 8h7M0 11h9M0 14h5M0 17h8M0 20h5M12 12h4"/><path d="M10.500 3v18" stroke="#29a3e0"/></svg><div class="field w96"><input value="0.0 mm" aria-label="右行缩进"><span class="steps"><button class="up" aria-label="增加"></button><button class="dn" aria-label="减少"></button></span></div><input type="checkbox" class="tick ms-2" aria-label="右缩进样式"></div>
          </div>
          <button class="more mt-2" aria-label="更多段落选项"><span class="drop"></span></button>
          <div class="sect nextsect">
            <h2>图文框<input type="checkbox" class="tick ms-auto" aria-label="图文框样式"></h2>
            <div class="line"><svg class="ic" viewBox="0 0 16 24"><path d="M1.500 5.500h13v13h-13z" fill="#ef6a10"/><path d="M0 4h3v3H0zM13 4h3v3h-3zM0 17h3v3H0zM13 17h3v3h-3z" fill="#2b2b2b" stroke="none"/><path d="M4.500 16L8 8l3.500 8M6 13h4" stroke="#fff" stroke-width="2"/></svg><div class="field w53"><svg width="33" height="22"><path d="M7 17L25 6" stroke="#d44"/></svg><button class="drop" aria-label="图文框填充"></button></div><input type="checkbox" class="tick ms-2" aria-label="填充样式"><button class="tb ms-4" aria-label="对齐基线"><svg class="ic" viewBox="0 0 24 24"><path d="M6 18l5.500-13L17 18M8 14h8" stroke-width="3"/><path d="M4 4.500h16" stroke-dasharray="2 1"/><path d="M4 19.500h16" stroke="#29a3e0"/></svg></button><input type="checkbox" class="tick ms-1" aria-label="基线样式"><button class="tb fly ms-4" aria-label="垂直对齐"><svg class="ic"><use href="#frame"/><path d="M8 8h8M8 11h8M8 14h6"/></svg></button><input type="checkbox" class="tick ms-1" aria-label="垂直样式"></div>
            <div class="line"><svg class="ic" viewBox="0 0 16 24"><path d="M0 5h7M0 8h7M0 11h7M0 14h7M0 17h7M0 20h7" stroke="#29a3e0"/><path d="M9 5h7M9 8h7M9 11h7M9 14h7M9 17h7M9 20h7"/></svg><div class="field w53"><input value="1" aria-label="栏数"><span class="steps"><button class="up" aria-label="增加"></button><button class="dn" aria-label="减少"></button></span></div><input type="checkbox" class="tick ms-2" aria-label="栏数样式"><button class="tb ms-4" aria-label="等宽栏"><svg class="ic opacity-50" viewBox="0 0 24 24"><path d="M4 5h7M4 8h7M4 11h7M4 14h7M4 17h7M4 20h7M13 5h7M13 8h7M13 11h7M13 14h7M13 17h7M13 20h7" stroke="#666"/></svg></button><input type="checkbox" class="tick ms-1" aria-label="等宽样式"><button class="tb ms-auto me-1" aria-label="栏设置"><svg class="ic"><use href="#dots"/></svg></button><input type="checkbox" class="tick" aria-label="栏样式"></div>
          </div>
        </div>
        <div class="dscroll"><svg width="16" height="16"><path d="M4 10l4-4 4 4" fill="none" stroke="#bbb" stroke-width="2"/></svg></div>
        </div>
      </div>
      <div class="sidecol">
        <button class="sidetab"><svg width="18" height="20"><text x="1" y="9" font-size="10" fill="#222">A</text><circle cx="13" cy="12" r="3" fill="none" stroke="#222" stroke-width="2"/></svg><span>文本</span></button>
        <button class="tb" aria-label="添加泊坞窗"><svg class="ic"><use href="#plusg"/></svg></button>
      </div>
    </div>
  </section>

  <aside class="palette d-flex flex-column flex-shrink-0">
    <svg width="18" height="65"><path d="M0 6h17M1 9h17" stroke="#aaa" stroke-dasharray="1 2"/><path d="M6 14l5 4-5 4z" fill="#666"/><path d="M2 44l8-8M9 34l4 4M11 36l4-4" stroke="#b5b5b5" stroke-width="3"/><path d="M4 58l4-4 4 4" fill="none" stroke="#c0c0c0" stroke-width="2"/></svg>
    <div id="pal"></div>
    <svg width="18" height="38"><path d="M4 6l4 4 4-4" fill="none" stroke="#999" stroke-width="2"/><path d="M4 22l4 4-4 4M9 22l4 4-4 4" fill="none" stroke="#bbb"/></svg>
  </aside>
</main>

<footer class="status d-flex align-items-center position-relative">
  <button class="tb fly" aria-label="状态选项"><svg class="ic"><use href="#gear"/></svg></button>
  <span class="ms-1">单击并拖动可扭曲选定部分</span>
  <span class="ms-4 ps-1">曲线 于 图层 1 &nbsp; (变形)</span>
  <div class="inkinfo ms-auto d-flex align-items-center">
    <svg class="ic"><use href="#buck"/></svg>
    <svg width="22" height="20"><path d="M.5.5h20v19H.5z" fill="#fff" stroke="#888"/><path d="M1 19L20 1" stroke="#d7182a" stroke-width="2"/></svg>
    <span class="ms-1">无</span>
    <svg class="ic ms-auto"><use href="#nib"/></svg>
    <svg width="21" height="20"><path d="M0 0h21v20H0z" fill="#231815"/></svg>
    <div class="cmyk d-flex ms-1"><span>C:</span><span>0M:</span><span>0Y:</span><span>0K:</span><span>100</span></div>
  </div>
</footer>

<div class="wm"><svg width="40" height="38" viewBox="0 0 40 38"><path d="M36 2C22 0 4 10 2 24c0 8 8 12 16 10C10 30 8 24 12 16S26 4 36 2z" fill="#5a9bdc"/><path d="M16 18c8-4 20-4 20 4s-10 14-20 14c8-4 12-8 11-12s-6-4-11-6z" fill="#74c48a"/><path d="M14 22c4-6 10-6 14-4-6 0-8 2-10 6z" fill="#3c7fc4"/></svg><b>极光下载站</b><i>www.xz7.com</i></div>
<svg class="over monitor" width="17" height="19" viewBox="0 0 17 19"><path d="M1 1h15v11H1z" fill="#2aa" stroke="#111" stroke-width="2"/><path d="M2 2h13v4H2z" fill="#d33"/><circle cx="8.500" cy="6.500" r="2" fill="#fff" stroke="#111"/><path d="M3 17h11M8.500 12v4" stroke="#111" stroke-width="2"/></svg>
<div class="ime"><span>EN</span><svg width="10" height="12" viewBox="0 0 10 12"><path d="M5 1c1 5-1 8-4 9 5 2 9-1 8-5-1-3-2-4-4-4z" fill="none" stroke="#333"/></svg><span>简</span></div>
<div class="tip" role="tooltip"><b>平滑变形</b><br>使变形中的节点平滑.</div>
<svg class="over" width="700" height="200"><g class="shade"><path d="M415 168l76-52" stroke="#d4141c" stroke-width="3"/><path d="M507 104l-26 8 7 6 3 11z" fill="#e8101a"/></g><path d="M523.500 104.500v16l4-4 3 6 2.500-1-3-6h5z" fill="#fff" stroke="#222"/></svg>
</div>

<script src="https://cdn.jsdelivr.net/npm/bootstrap@5.3.0/dist/js/bootstrap.bundle.min.js"></script>
<script>
const menus=[['文件','F'],['编辑','E'],['查看','V'],['布局','L'],['对象','J'],['效果','C'],['位图','B'],['文本','X'],['表格','T'],['工具','O'],['窗口','W'],['帮助','H'],['购买','']];
document.getElementById('menu').innerHTML=menus.map(([t,k])=>`<a href="#">${t}${k?`<span class="key">(<u>${k}</u>)</span>`:''}</a>`).join('');

// Rulers: a small tick every 5 mm, a label every 50 mm
const step=10.86;
const size=i=>i%10===0?4:i%5===0?2:1;
let h='',d='';
for(let i=-48;i<=91;i++){const x=Math.round(531+i*step)+.5;
  d+=`M${x} ${16-size(i)}v${size(i)}`;
  if(i&&i%10===0&&x>60&&x<1500)h+=`<text x="${x}" y="10">${Math.abs(i*5)}</text>`;}
document.getElementById('hr').innerHTML=`<path d="${d}"/>${h}<text x="1519" y="10">毫米</text>`;
h='';d='';
for(let i=-7;i<=66;i++){const y=Math.round(725-i*step)+.5;
  d+=`M${16-size(i)} ${y}h${size(i)}`;
  if(i%10===0&&y>20)h+=`<text transform="translate(11 ${y}) rotate(-90)">${i*5}</text>`;}
document.getElementById('vr').innerHTML=`<path d="${d}"/>${h}`;

// Zipper curve
let w='M631 256';
for(let i=0;i<39;i++){const a=631+i*6.05,b=a+6.05,y0=i%2?268:256,y1=i%2?256:268;w+=`C${a+2} ${y0} ${b-2} ${y1} ${b} ${y1}`;}
document.getElementById('wave').setAttribute('d',w);

const colors='231815 3e3a39 595757 727171 898989 9fa0a0 b5b5b6 c9caca dcdddd efefef ffffff 1d2088 00a0e9 009944 fff100 e60012 e4007f a9417f f08300 f5b2b2 88776b d0cce6 a595c8 6b87c6 7a6ab0 8d82ab 4f6391 5a5270 7487a0 0090dc a0d8f5 b8ccd8 92a5b0 6c7d88 4a5560 547070 3a8f77 6c9890 4aa890 55a66a 5ac3ce 48a8b4 b4cbb8 d3ead4 9fd5a5'.split(' ');
document.getElementById('pal').innerHTML='<button class="sw" aria-label="无"><svg width="16" height="16"><path d="M0 0h16v16H0z" fill="#fff"/><path d="M2 14L14 2" stroke="#d33"/></svg></button>'+colors.map((c,i)=>`<button class="sw${i===43?' tall':i===44?' cut':''}" style="background:#${c}" aria-label="色样 ${i+1}"></button>`).join('');
</script>
</body>
</html>
